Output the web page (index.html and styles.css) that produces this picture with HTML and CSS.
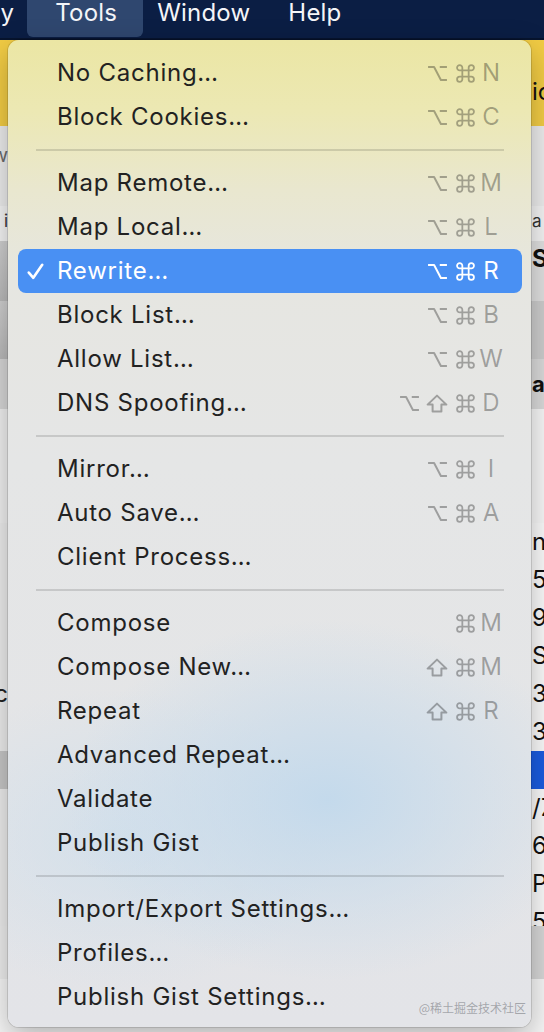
FILE: index.html
```html
<!DOCTYPE html>
<html lang="en">
<head>
<meta charset="utf-8">
<title>Tools menu</title>
<link rel="stylesheet" href="styles.css">
</head>
<body>
<svg class="defs" width="0" height="0" aria-hidden="true">
  <defs>
    <symbol id="opt" viewBox="0 0 22 18"><path d="M1 2.2 H7.4 L14.6 15.8 H21 M13.4 2.2 H21" fill="none" stroke="currentColor" stroke-width="2.1" stroke-linejoin="round"/></symbol>
    <symbol id="cmd" viewBox="1 1 18 18"><path d="M7 7V4.5A2.5 2.5 0 1 0 4.5 7H15.5A2.5 2.5 0 1 0 13 4.5V15.5A2.5 2.5 0 1 0 15.5 13H4.5A2.5 2.5 0 1 0 7 15.5Z" fill="none" stroke="currentColor" stroke-width="1.7"/></symbol>
    <symbol id="shift" viewBox="0 0 22 19"><path d="M11 1.6 L20.4 10.6 H15.4 V17.6 H6.6 V10.6 H1.6 Z" fill="none" stroke="currentColor" stroke-width="2" stroke-linejoin="round"/></symbol>
  </defs>
</svg>
<div class="screen">
  <div class="menubar">
    <span class="mb-item mb-cut">ty</span>
    <span class="mb-item mb-active">Tools</span>
    <span class="mb-item mb-window">Window</span>
    <span class="mb-item mb-help">Help</span>
  </div>

  <div class="app">
    <div class="band banner"><div class="frag-l"></div><div class="frag-r txt-dark">ic</div></div>
    <div class="band toolbar"><div class="frag-l txt-mid">w</div><div class="frag-r"></div></div>
    <div class="band tabs"><div class="frag-l txt-small">i</div><div class="frag-r txt-small">a</div></div>
    <div class="band head1"><div class="frag-l"></div><div class="frag-r txt-bold">Se</div></div>
    <div class="band head2"><div class="frag-l"></div><div class="frag-r"></div></div>
    <div class="band head3"><div class="frag-l"></div><div class="frag-r txt-bold">ar</div></div>
    <div class="band blank"><div class="frag-l"></div><div class="frag-r"></div></div>
    <div class="band trow"><div class="frag-l"></div><div class="frag-r">n</div></div>
    <div class="band trow"><div class="frag-l"></div><div class="frag-r">5</div></div>
    <div class="band trow"><div class="frag-l"></div><div class="frag-r">9</div></div>
    <div class="band trow"><div class="frag-l"></div><div class="frag-r">S</div></div>
    <div class="band trow"><div class="frag-l">c</div><div class="frag-r">3</div></div>
    <div class="band trow"><div class="frag-l"></div><div class="frag-r">3</div></div>
    <div class="band trow sel"><div class="frag-l"></div><div class="frag-r"></div></div>
    <div class="band trow"><div class="frag-l"></div><div class="frag-r">/Z</div></div>
    <div class="band trow"><div class="frag-l"></div><div class="frag-r">69</div></div>
    <div class="band trow"><div class="frag-l"></div><div class="frag-r">P</div></div>
    <div class="band trow cut"><div class="frag-l"></div><div class="frag-r">59</div></div>
    <div class="band statusbar"><div class="frag-l"></div><div class="frag-r"></div></div>
    <div class="band footer"><div class="frag-l"></div><div class="frag-r"></div></div>
  </div>

  <div class="menu">
    <div class="item"><span class="check"></span><span class="label">No Caching…</span><span class="keys"><span class="mod"><svg class="m-opt"><use href="#opt"/></svg></span><span class="mod"><svg class="m-cmd"><use href="#cmd"/></svg></span><span class="key">N</span></span></div>
    <div class="item"><span class="check"></span><span class="label">Block Cookies…</span><span class="keys"><span class="mod"><svg class="m-opt"><use href="#opt"/></svg></span><span class="mod"><svg class="m-cmd"><use href="#cmd"/></svg></span><span class="key">C</span></span></div>
    <div class="sep"></div>
    <div class="item"><span class="check"></span><span class="label">Map Remote…</span><span class="keys"><span class="mod"><svg class="m-opt"><use href="#opt"/></svg></span><span class="mod"><svg class="m-cmd"><use href="#cmd"/></svg></span><span class="key">M</span></span></div>
    <div class="item"><span class="check"></span><span class="label">Map Local…</span><span class="keys"><span class="mod"><svg class="m-opt"><use href="#opt"/></svg></span><span class="mod"><svg class="m-cmd"><use href="#cmd"/></svg></span><span class="key">L</span></span></div>
    <div class="item active"><span class="check"><svg width="17" height="17" viewBox="0 0 17 17"><path d="M1.8 9.6 L6.3 14.8 L15.2 1.8" fill="none" stroke="#fff" stroke-width="2.6" stroke-linecap="round" stroke-linejoin="round"/></svg></span><span class="label">Rewrite…</span><span class="keys"><span class="mod"><svg class="m-opt"><use href="#opt"/></svg></span><span class="mod"><svg class="m-cmd"><use href="#cmd"/></svg></span><span class="key">R</span></span></div>
    <div class="item"><span class="check"></span><span class="label">Block List…</span><span class="keys"><span class="mod"><svg class="m-opt"><use href="#opt"/></svg></span><span class="mod"><svg class="m-cmd"><use href="#cmd"/></svg></span><span class="key">B</span></span></div>
    <div class="item"><span class="check"></span><span class="label">Allow List…</span><span class="keys"><span class="mod"><svg class="m-opt"><use href="#opt"/></svg></span><span class="mod"><svg class="m-cmd"><use href="#cmd"/></svg></span><span class="key">W</span></span></div>
    <div class="item"><span class="check"></span><span class="label">DNS Spoofing…</span><span class="keys"><span class="mod"><svg class="m-opt"><use href="#opt"/></svg></span><span class="mod"><svg class="m-shift"><use href="#shift"/></svg></span><span class="mod"><svg class="m-cmd"><use href="#cmd"/></svg></span><span class="key">D</span></span></div>
    <div class="sep"></div>
    <div class="item"><span class="check"></span><span class="label">Mirror…</span><span class="keys"><span class="mod"><svg class="m-opt"><use href="#opt"/></svg></span><span class="mod"><svg class="m-cmd"><use href="#cmd"/></svg></span><span class="key">I</span></span></div>
    <div class="item"><span class="check"></span><span class="label">Auto Save…</span><span class="keys"><span class="mod"><svg class="m-opt"><use href="#opt"/></svg></span><span class="mod"><svg class="m-cmd"><use href="#cmd"/></svg></span><span class="key">A</span></span></div>
    <div class="item"><span class="check"></span><span class="label">Client Process…</span></div>
    <div class="sep"></div>
    <div class="item"><span class="check"></span><span class="label">Compose</span><span class="keys"><span class="mod"><svg class="m-cmd"><use href="#cmd"/></svg></span><span class="key">M</span></span></div>
    <div class="item"><span class="check"></span><span class="label">Compose New…</span><span class="keys"><span class="mod"><svg class="m-shift"><use href="#shift"/></svg></span><span class="mod"><svg class="m-cmd"><use href="#cmd"/></svg></span><span class="key">M</span></span></div>
    <div class="item"><span class="check"></span><span class="label">Repeat</span><span class="keys"><span class="mod"><svg class="m-shift"><use href="#shift"/></svg></span><span class="mod"><svg class="m-cmd"><use href="#cmd"/></svg></span><span class="key">R</span></span></div>
    <div class="item"><span class="check"></span><span class="label">Advanced Repeat…</span></div>
    <div class="item"><span class="check"></span><span class="label">Validate</span></div>
    <div class="item"><span class="check"></span><span class="label">Publish Gist</span></div>
    <div class="sep"></div>
    <div class="item"><span class="check"></span><span class="label">Import/Export Settings…</span></div>
    <div class="item"><span class="check"></span><span class="label">Profiles…</span></div>
    <div class="item"><span class="check"></span><span class="label">Publish Gist Settings…</span></div>
  </div>

  <div class="watermark">@稀土掘金技术社区</div>
</div>
</body>
</html>
```

FILE: styles.css
```css
html, body {
  margin: 0;
  padding: 0;
}
body {
  width: 544px;
  height: 1032px;
  overflow: hidden;
  font-family: "Inter", "Noto Sans", sans-serif;
  background: #f4f4f4;
}
.defs {
  position: absolute;
  width: 0;
  height: 0;
  overflow: hidden;
}
.screen {
  position: relative;
  width: 544px;
  height: 1032px;
  overflow: hidden;
}

/* ---------- menubar ---------- */
.menubar {
  display: flex;
  align-items: flex-start;
  height: 38px;
  background: #0b1e44;
  color: #f4f5f8;
  font-size: 24px;
  line-height: 26px;
  white-space: nowrap;
  border-bottom: 2px solid #07142e;
}
.mb-item {
  display: block;
  height: 38px;
  letter-spacing: 0.2px;
}
.mb-cut {
  margin-left: -8px;
}
.mb-active {
  margin-left: 13px;
  width: 116px;
  padding-left: 28px;
  box-sizing: border-box;
  background: #2f476f;
  border-radius: 0 0 6px 6px;
  height: 37px;
}
.mb-window {
  margin-left: 14px;
}
.mb-help {
  margin-left: 38px;
}

/* ---------- background app (under the menu) ---------- */
.app {
  display: flex;
  flex-direction: column;
}
.band {
  display: flex;
  justify-content: space-between;
  font-size: 24px;
  color: #111;
  white-space: nowrap;
}
.frag-l {
  width: 8px;
  overflow: hidden;
  display: flex;
  justify-content: flex-end;
}
.frag-r {
  width: 13px;
  overflow: hidden;
  padding-left: 1px;
  box-sizing: border-box;
}
.banner {
  height: 86px;
  background: #f2cc44;
  line-height: 104px;
}
.toolbar {
  height: 80px;
  background: #ececec;
}
.toolbar .frag-l {
  line-height: 58px;
}
.txt-mid { color: #6b6b6b; font-size: 20px; }
.tabs {
  height: 35px;
  background: #f3f3f3;
  line-height: 30px;
}
.txt-small { font-size: 17px; color: #333; }
.head1 {
  height: 60px;
  background: #e0e0e0;
  line-height: 36px;
}
.head1 .frag-l, .head2 .frag-l {
  background: linear-gradient(180deg, #cfcfcf, #b9b9b9);
}
.txt-bold { font-weight: 700; }
.head2 {
  height: 58px;
  background: #cdcdcd;
}
.head3 {
  height: 50px;
  background: #dadada;
  line-height: 50px;
  font-size: 22px;
}
.head3 .frag-l { background: #d6d6d6; }
.blank {
  height: 114px;
  background: #f7f7f7;
}
.blank .frag-l { background: #efefef; }
.trow {
  height: 38px;
  line-height: 38px;
  background: #fafafa;
  font-size: 24px;
  overflow: hidden;
}
.trow .frag-l { background: #ececec; color: #222; }
.trow.sel { background: #1a5ce0; }
.trow.sel .frag-l { background: #c6c6c6; }
.trow.cut { height: 23px; }
.statusbar {
  height: 53px;
  background: #d7d7d7;
}
.statusbar .frag-l { background: #ededed; }
.footer {
  height: 60px;
  background: #f6f6f6;
}

/* ---------- dropdown menu (overlay) ---------- */
.menu {
  position: absolute;
  left: 8px;
  top: 40px;
  width: 523px;
  box-sizing: border-box;
  padding: 11px 9px 8px 10px;
  border-radius: 11px;
  background:
    radial-gradient(ellipse 260px 180px at 320px 760px, rgba(194, 217, 236, 0.95), rgba(194, 217, 236, 0) 100%),
    radial-gradient(ellipse 220px 150px at 110px 800px, rgba(205, 222, 236, 0.7), rgba(205, 222, 236, 0) 100%),
    linear-gradient(180deg, #ebe6a4 0px, #ece8b3 70px, #e9e7cf 150px, #e6e6e1 240px, #e5e6e6 420px, #e4e5e7 700px, #e3e4e8 987px);
  box-shadow: 0 0 0 1px rgba(0, 0, 0, 0.12), 0 10px 30px rgba(0, 0, 0, 0.28);
  color: #222;
  font-size: 24px;
  white-space: nowrap;
}
.item {
  display: flex;
  align-items: center;
  height: 44px;
  line-height: 44px;
  padding: 0 19px 0 9px;
  border-radius: 8px;
}
.label {
  letter-spacing: 0.75px;
}
.item.active {
  background: #4990f3;
  color: #fff;
}
.check {
  width: 30px;
  height: 44px;
  display: flex;
  align-items: center;
}
.check svg {
  display: block;
  margin-top: 1px;
}
.keys {
  margin-left: auto;
  display: flex;
  align-items: center;
  color: rgba(0, 0, 0, 0.31);
}
.item.active .keys {
  color: #fff;
}
.mod {
  width: 28px;
  height: 44px;
  display: flex;
  align-items: center;
  justify-content: center;
}
.mod svg {
  display: block;
}
.m-opt {
  width: 21px;
  height: 17px;
}
.m-cmd {
  width: 19px;
  height: 19px;
}
.m-shift {
  width: 22px;
  height: 19px;
}
.key {
  width: 24px;
  text-align: center;
}
.sep {
  height: 22px;
  display: flex;
  align-items: center;
  padding: 0 18px;
}
.sep::before {
  content: "";
  flex: 1;
  height: 2px;
  background: rgba(0, 0, 0, 0.13);
}

/* ---------- watermark ---------- */
.watermark {
  position: absolute;
  right: 18px;
  top: 1000px;
  font-family: "Noto Sans CJK SC", "Noto Sans", sans-serif;
  font-size: 12px;
  line-height: 16px;
  color: rgba(110, 112, 118, 0.55);
}
```
